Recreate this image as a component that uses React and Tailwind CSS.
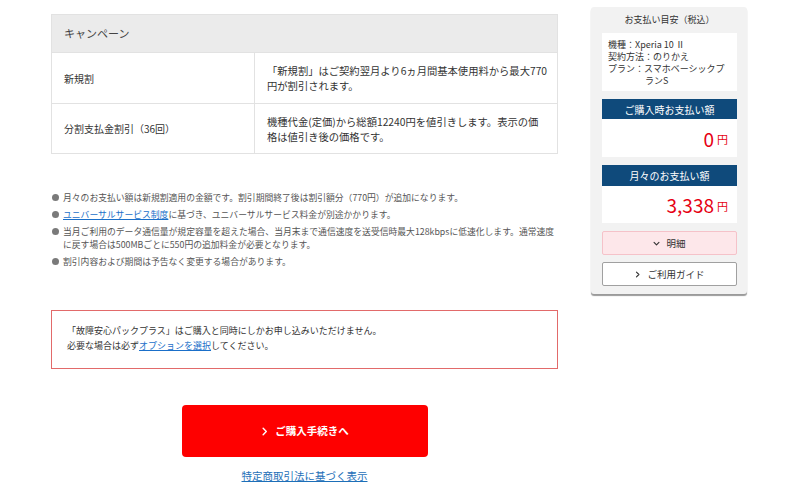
import React from 'react';

const font = { fontFamily: '"Noto Sans CJK JP", "Noto Sans", sans-serif' };

const notes = [
    { text: '月々のお支払い額は新規割適用の金額です。割引期間終了後は割引額分（770円）が追加になります。' },
    { link: 'ユニバーサルサービス制度', text: 'に基づき、ユニバーサルサービス料金が別途かかります。' },
    { text: '当月ご利用のデータ通信量が規定容量を超えた場合、当月末まで通信速度を送受信時最大128kbpsに低速化します。通常速度に戻す場合は500MBごとに550円の追加料金が必要となります。' },
    { text: '割引内容および期間は予告なく変更する場合があります。' },
];

const Chevron = ({ className, dir = 'right' }) => (
    <svg viewBox="0 0 10 10" className={className} fill="none" stroke="currentColor" strokeWidth="1.6" strokeLinecap="round" strokeLinejoin="round">
        {dir === 'right' ? <path d="M3.5 1.5 L7 5 L3.5 8.5" /> : <path d="M1.5 3.5 L5 7 L8.5 3.5" />}
    </svg>
);

const CampaignTable = () => (
    <div className="border border-[#e2e2e2] text-[#333]">
        <div className="h-[38px] bg-[#ebebeb] flex items-center pl-3 text-[11px] text-[#444] border-b border-[#e2e2e2]">
            キャンペーン
        </div>
        <div className="grid grid-cols-[203px_1fr] h-[51px] border-b border-[#e2e2e2]">
            <div className="flex items-center pl-3 text-[10px] border-r border-[#e2e2e2]">新規割</div>
            <div className="flex items-center pl-3 pr-[4px] text-[10.3px] leading-[15px]">
                「新規割」はご契約翌月より6ヵ月間基本使用料から最大770円が割引されます。
            </div>
        </div>
        <div className="grid grid-cols-[203px_1fr] h-[49px]">
            <div className="flex items-center pl-3 text-[10px] border-r border-[#e2e2e2]">分割支払金割引（36回）</div>
            <div className="flex items-center pl-3 pr-[10px] text-[10.3px] leading-[15px]">
                機種代金(定価)から総額12240円を値引きします。表示の価格は値引き後の価格です。
            </div>
        </div>
    </div>
);

const Notes = () => (
    <ul className="mt-[37px] flex flex-col gap-[4px] text-[8.8px] leading-[13px] text-[#555]">
        {notes.map((n, i) => (
            <li key={i} className="flex">
                <span className="w-[7px] h-[7px] rounded-full bg-[#7a7a7a] mt-[3px] ml-[1px] mr-[4px] shrink-0" />
                <span>
                    {n.link && <a className="text-[#1a6fc9] underline">{n.link}</a>}
                    {n.text}
                </span>
            </li>
        ))}
    </ul>
);

const Sidebar = () => (
    <aside className="w-[156px] mt-[7px] self-start bg-[#f2f2f2] rounded-[3px] shadow-[0_2px_1px_#9a9a9a] pl-[11px] pr-[10px] pb-[8px] text-[#333]">
        <div className="h-[26px] flex items-center justify-center text-[9px]">お支払い目安（税込）</div>
        <div className="bg-white h-[58px] pt-[6px] pl-[6px] text-[9px] leading-[12px]">
            <div>機種：Xperia 10 Ⅱ</div>
            <div>契約方法：のりかえ</div>
            <div>プラン：スマホベーシックプ</div>
            <div className="pl-[37px]">ランS</div>
        </div>
        <div className="mt-[8px] h-[20px] bg-[#0f4a7b] text-white text-[10px] flex items-center justify-center">ご購入時お支払い額</div>
        <div className="h-[38px] bg-white flex items-center justify-end pr-[9px] text-[#e60012]">
            <span className="text-[19px] leading-none">0</span>
            <span className="text-[11px] ml-[3px] mt-[3px]">円</span>
        </div>
        <div className="mt-[8px] h-[21px] bg-[#0f4a7b] text-white text-[10px] flex items-center justify-center">月々のお支払い額</div>
        <div className="h-[37px] bg-white flex items-center justify-end pr-[9px] text-[#e60012]">
            <span className="text-[19px] leading-none">3,338</span>
            <span className="text-[11px] ml-[3px] mt-[3px]">円</span>
        </div>
        <button className="mt-[8px] w-full h-[24px] bg-[#fde7ea] border border-[#f5c2c9] rounded-[2px] flex items-center justify-center gap-[6px] text-[9.5px]">
            <Chevron dir="down" className="w-[7px] h-[7px]" />
            明細
        </button>
        <button className="mt-[7px] w-full h-[24px] bg-white border border-[#a0a0a0] rounded-[2px] flex items-center justify-center gap-[6px] text-[9.5px]">
            <Chevron className="w-[7px] h-[7px]" />
            ご利用ガイド
        </button>
    </aside>
);

export default function App() {
    return (
        <div className="w-[800px] h-[504px] overflow-hidden bg-white flex" style={font}>
            <main className="ml-[51px] w-[507px] pt-[14px]">
                <CampaignTable />
                <Notes />
                <div className="mt-[42px] h-[59px] border border-[#e26a6a] pl-[15px] pb-[3px] flex flex-col justify-center text-[9px] leading-[15px] text-[#333]">
                    <p>「故障安心パックプラス」はご購入と同時にしかお申し込みいただけません。</p>
                    <p>必要な場合は必ず<a className="text-[#1a6fc9] underline">オプションを選択</a>してください。</p>
                </div>
                <div className="flex flex-col items-center">
                    <button className="mt-[36px] w-[246px] h-[52px] bg-[#fe0000] rounded-[4px] text-white text-[10.5px] font-bold flex items-center justify-center gap-[6px]">
                        <Chevron className="w-[9px] h-[9px]" />
                        ご購入手続きへ
                    </button>
                    <a className="mt-[11px] text-[10.5px] text-[#1d6fb8] underline">特定商取引法に基づく表示</a>
                </div>
            </main>
            <div className="ml-[33px]">
                <Sidebar />
            </div>
        </div>
    );
}
